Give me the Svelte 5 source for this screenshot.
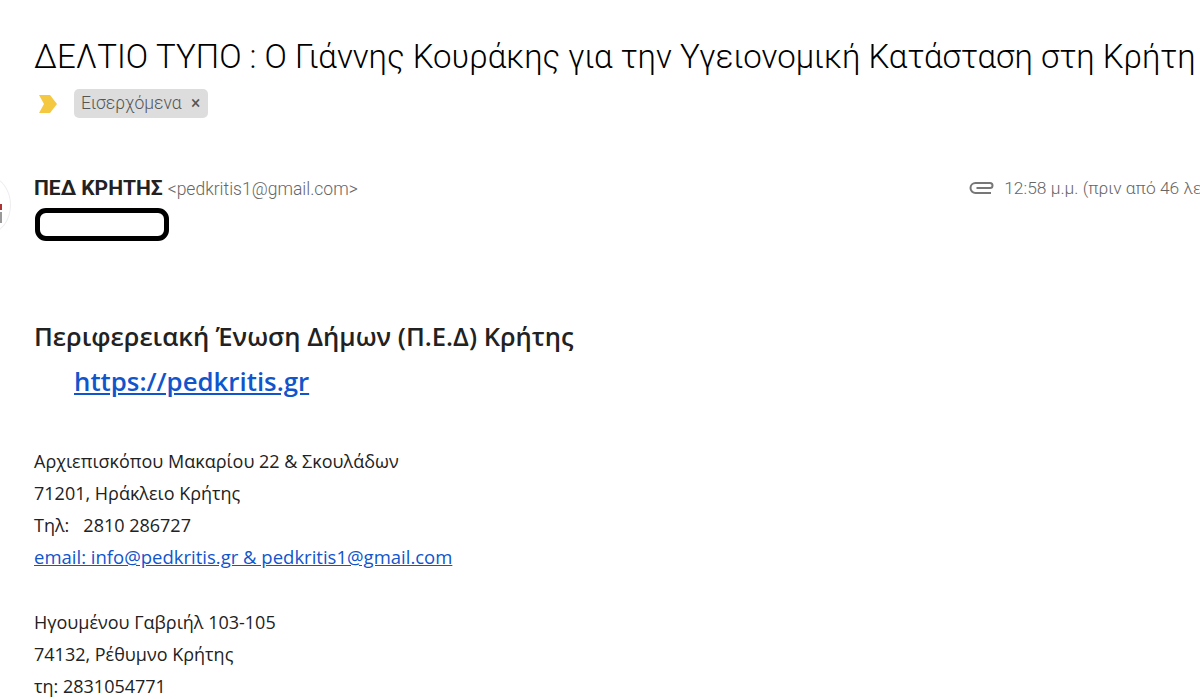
<script lang="ts">
	const address = [
		'Αρχιεπισκόπου Μακαρίου 22 & Σκουλάδων',
		'71201, Ηράκλειο Κρήτης',
		'Τηλ:   2810 286727'
	];
	const branch = ['Ηγουμένου Γαβριήλ 103-105', '74132, Ρέθυμνο Κρήτης', 'τη: 2831054771'];
</script>

<div class="page">
	<h1>ΔΕΛΤΙΟ ΤΥΠΟ : Ο Γιάννης Κουράκης για την Υγειονομική Κατάσταση στη Κρήτη</h1>

	<div class="labels">
		<svg class="marker" width="20" height="18" viewBox="0 0 20 18">
			<path d="M1 0h11l7 9-7 9H1l5-9z" fill="#f5c842" />
		</svg>
		<span class="chip">Εισερχόμενα <span class="close">×</span></span>
	</div>

	<div class="sender">
		<div class="avatar"><span class="mark"></span></div>
		<div class="who">
			<div class="from">
				<strong>ΠΕΔ ΚΡΗΤΗΣ</strong>
				<span class="addr">&lt;pedkritis1@gmail.com&gt;</span>
			</div>
			<div class="redacted"></div>
		</div>
		<div class="meta">
			<svg width="26" height="16" viewBox="0 0 26 16" fill="none" stroke="#777" stroke-width="2">
				<path d="M22 13H6.5a5 5 0 0 1 0-10H21a2.5 2.5 0 0 1 0 5H7.5" />
			</svg>
			<span>12:58 μ.μ. (πριν από 46 λεπτά)</span>
		</div>
	</div>

	<div class="body">
		<h2>Περιφερειακή Ένωση Δήμων (Π.Ε.Δ) Κρήτης</h2>
		<a class="site" href="#top">https://pedkritis.gr</a>

		<div class="block first">
			{#each address as line}
				<p>{line}</p>
			{/each}
			<p><a href="#top">email: info@pedkritis.gr &amp; pedkritis1@gmail.com</a></p>
		</div>

		<div class="block">
			{#each branch as line}
				<p>{line}</p>
			{/each}
		</div>
	</div>
</div>

<style>
	:global(body) {
		margin: 0;
		background: #fff;
		overflow: hidden;
	}

	.page {
		width: 1200px;
		height: 699px;
		overflow: hidden;
		box-sizing: border-box;
		padding: 36px 0 0 34px;
		font-family: 'Open Sans', 'Noto Sans', sans-serif;
		color: #222;
	}

	h1 {
		margin: 0;
		font-family: Roboto, sans-serif;
		font-size: 33px;
		line-height: 42px;
		font-weight: 300;
		color: #000;
		white-space: nowrap;
	}

	.labels {
		display: flex;
		align-items: center;
		gap: 16px;
		margin-top: 11px;
		height: 29px;
	}

	.marker {
		margin-left: 4px;
		flex: none;
	}

	.chip {
		background: #ddd;
		border-radius: 5px;
		padding: 0 8px 0 7px;
		font-family: Roboto, sans-serif;
		font-size: 17.5px;
		font-weight: 300;
		line-height: 29px;
		color: #555;
	}

	.close {
		margin-left: 5px;
		font-weight: 400;
	}

	.sender {
		display: flex;
		margin-top: 59px;
		margin-left: -34px;
	}

	.avatar {
		width: 40px;
		height: 54px;
		margin-left: -31px;
		margin-right: 23px;
		border-radius: 50%;
		border: 1px solid #eee;
		position: relative;
		flex: none;
	}

	.mark {
		position: absolute;
		right: 8px;
		top: 26px;
		width: 3px;
		height: 19px;
		background: linear-gradient(#a33 0 6px, #fff 6px 8px, #999 8px);
	}

	.who {
		flex: none;
	}

	.from {
		display: flex;
		align-items: baseline;
		gap: 5px;
		line-height: 22px;
	}

	.from strong {
		font-family: Roboto, sans-serif;
		font-size: 21px;
		font-weight: 700;
		color: #222;
	}

	.addr {
		font-family: Roboto, sans-serif;
		font-size: 17.5px;
		font-weight: 300;
		color: #666;
	}

	.redacted {
		box-sizing: border-box;
		width: 134px;
		height: 33px;
		margin: 8px 0 0 1px;
		border: 5px solid #000;
		border-radius: 11px;
	}

	.meta {
		margin-left: auto;
		display: flex;
		align-items: center;
		gap: 9px;
		height: 22px;
		font-family: Roboto, sans-serif;
		font-size: 17.4px;
		font-weight: 300;
		color: #666;
		white-space: nowrap;
		margin-right: -37px;
	}

	.body {
		margin-top: 81px;
	}

	h2 {
		margin: 0;
		font-size: 25.6px;
		line-height: 30px;
		font-weight: 600;
		color: #222;
	}

	.site {
		display: inline-block;
		margin: 14px 0 0 40px;
		font-size: 25.8px;
		line-height: 30px;
		font-weight: 600;
		color: #1155cc;
	}

	.block {
		margin-top: 33px;
		font-size: 18px;
		line-height: 32px;
	}

	.block.first {
		margin-top: 49px;
	}

	p {
		margin: 0;
		white-space: pre;
	}

	.block a {
		font-size: 18.5px;
		color: #1155cc;
	}
</style>
